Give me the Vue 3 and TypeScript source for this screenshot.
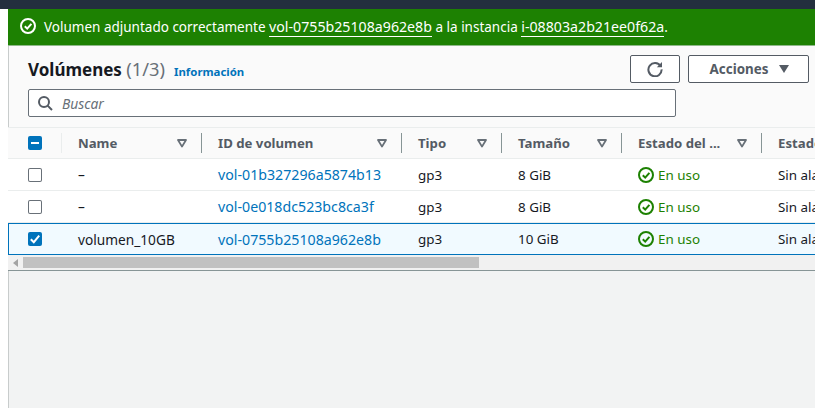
<template>
  <div class="page">
    <div class="top-bar"></div>
    <div class="body">
      <div class="left-strip"></div>
      <main class="content">
        <div class="flash">
          <svg class="flash-icon" viewBox="0 0 16 16" width="16" height="16">
            <circle cx="8" cy="8" r="7" fill="none" stroke="#fff" stroke-width="2" />
            <path d="M4.8 8.2 7.2 10.6 11.4 5.8" fill="none" stroke="#fff" stroke-width="2" />
          </svg>
          <span>Volumen adjuntado correctamente <a class="flash-link">vol-0755b25108a962e8b</a> a la instancia <a class="flash-link">i-08803a2b21ee0f62a</a>.</span>
        </div>

        <section class="panel">
          <div class="head">
            <div class="head-left">
              <div class="title-row">
                <h1>Volúmenes <span class="count">(1/3)</span></h1>
                <a class="info">Información</a>
              </div>
              <div class="search">
                <svg viewBox="0 0 16 16" width="16" height="16">
                  <circle cx="7" cy="7" r="5" fill="none" stroke="#545b64" stroke-width="2" />
                  <path d="M10.6 10.6 15 15" fill="none" stroke="#545b64" stroke-width="2" />
                </svg>
                <span>Buscar</span>
              </div>
            </div>
            <div class="actions">
              <button class="btn btn-icon">
                <svg viewBox="0 0 16 16" width="16" height="16">
                  <path d="M13.6 5.2A6.6 6.6 0 1 0 14.6 8.4" fill="none" stroke="#545b64" stroke-width="2" />
                  <path d="M15 1v5.2H9.8z" fill="#545b64" />
                </svg>
              </button>
              <button class="btn btn-actions">
                <span>Acciones</span>
                <svg viewBox="0 0 10 8" width="10" height="8"><path d="M0 0h10L5 8z" fill="#545b64" /></svg>
              </button>
            </div>
          </div>

          <div class="table">
            <div class="row header">
              <div class="cell check-cell">
                <span class="check on">
                  <svg viewBox="0 0 14 14" width="14" height="14"><path d="M3 7h8" stroke="#fff" stroke-width="2" /></svg>
                </span>
                <i class="sep light"></i>
              </div>
              <div v-for="col in columns" :key="col" class="cell head-cell">
                <span class="head-label">{{ col }}</span>
                <svg class="sort" viewBox="0 0 10 9" width="10" height="9">
                  <path d="M1 1h8L5 7.6z" fill="none" stroke="#687078" stroke-width="1.8" stroke-linejoin="round" />
                </svg>
                <i class="sep"></i>
              </div>
              <div class="cell head-cell"><span class="head-label">Estado</span></div>
            </div>

            <div v-for="vol in volumes" :key="vol.id" class="row item" :class="{ selected: vol.selected }">
              <div class="cell check-cell">
                <span class="check" :class="{ on: vol.selected }">
                  <svg v-if="vol.selected" viewBox="0 0 14 14" width="14" height="14">
                    <path d="M2.8 7.2 5.8 10.2 11.2 3.6" fill="none" stroke="#fff" stroke-width="2" />
                  </svg>
                </span>
              </div>
              <div class="cell name">{{ vol.name }}</div>
              <div class="cell"><a class="link">{{ vol.id }}</a></div>
              <div class="cell">gp3</div>
              <div class="cell">{{ vol.size }}</div>
              <div class="cell status">
                <svg viewBox="0 0 16 16" width="16" height="16">
                  <circle cx="8" cy="8" r="7" fill="none" stroke="#1d8102" stroke-width="2" />
                  <path d="M4.8 8.2 7.2 10.6 11.4 5.8" fill="none" stroke="#1d8102" stroke-width="2" />
                </svg>
                En uso
              </div>
              <div class="cell">Sin alarmas</div>
            </div>
          </div>

          <div class="scrollbar">
            <svg viewBox="0 0 5 8" width="5" height="8"><path d="M5 0v8L0 4z" fill="#a3a3a3" /></svg>
            <div class="thumb"></div>
          </div>
        </section>
      </main>
    </div>
  </div>
</template>

<script setup lang="ts">
interface Volume {
  name: string
  id: string
  size: string
  selected: boolean
}

const columns = ['Name', 'ID de volumen', 'Tipo', 'Tamaño', 'Estado del ...']

const volumes: Volume[] = [
  { name: '–', id: 'vol-01b327296a5874b13', size: '8 GiB', selected: false },
  { name: '–', id: 'vol-0e018dc523bc8ca3f', size: '8 GiB', selected: false },
  { name: 'volumen_10GB', id: 'vol-0755b25108a962e8b', size: '10 GiB', selected: true }
]
</script>

<style>
html,
body {
  margin: 0;
  overflow: hidden;
}
</style>

<style scoped>
.page {
  width: 815px;
  height: 408px;
  display: flex;
  flex-direction: column;
  overflow: hidden;
  background: #fff;
  font-family: "Noto Sans", "Open Sans", sans-serif;
  font-size: 13.4px;
  color: #16191f;
}

.top-bar {
  height: 9px;
  flex: none;
  background: #232f3e;
}

.body {
  flex: 1;
  display: flex;
  min-height: 0;
}

.left-strip {
  width: 8px;
  flex: none;
  background: #fff;
}

.content {
  flex: 1;
  min-width: 0;
  display: flex;
  flex-direction: column;
  background: #f2f3f3;
  box-shadow: inset 1px 0 0 #c8cccc;
}

.flash {
  height: 37px;
  flex: none;
  box-sizing: border-box;
  display: flex;
  align-items: center;
  gap: 8px;
  padding: 0 0 2px 12px;
  background: #1d8102;
  border-bottom: 1px solid #8fb98a;
  color: #fff;
  font-size: 13.5px;
  white-space: nowrap;
}

.flash-link {
  font-size: 14.2px;
  border-bottom: 1px solid #fff;
}

.panel {
  background: #fafafa;
  min-width: 0;
  overflow: hidden;
  box-shadow: inset 1px 0 0 #c8cccc;
}

.head {
  height: 82px;
  box-sizing: border-box;
  display: flex;
  padding: 9px 6px 0 20px;
  border-bottom: 1px solid #eaeded;
}

.head-left {
  width: 648px;
  flex: none;
}

.title-row {
  display: flex;
  align-items: baseline;
  gap: 9px;
  height: 34px;
}

h1 {
  margin: 0;
  font-size: 17px;
  line-height: 28px;
  font-weight: 700;
  color: #16191f;
}

.count {
  font-weight: 400;
  color: #687078;
  font-size: 18.3px;
}

.info {
  font-size: 11.4px;
  font-weight: 700;
  color: #0073bb;
}

.search {
  height: 28px;
  box-sizing: border-box;
  display: flex;
  align-items: center;
  gap: 9px;
  padding-left: 8px;
  background: #fff;
  border: 1px solid #687078;
  border-radius: 2px;
  font-style: italic;
  color: #687078;
  font-size: 13.8px;
}

.actions {
  display: flex;
  gap: 8px;
  margin-left: -46px;
  height: 28px;
}

.btn {
  height: 28px;
  box-sizing: border-box;
  display: flex;
  align-items: center;
  justify-content: center;
  padding: 0;
  background: #fff;
  border: 1px solid #545b64;
  border-radius: 2px;
  font: inherit;
  font-size: 13.4px;
  font-weight: 700;
  color: #545b64;
}

.btn-icon {
  width: 50px;
}

.btn-actions {
  width: 121px;
  gap: 11px;
  padding-left: 2px;
}

.table {
  width: 900px;
}

.row {
  display: grid;
  grid-template-columns: 54px 140px 200px 100px 120px 140px 146px;
}

.header {
  height: 31px;
  box-sizing: border-box;
  background: #fafafa;
  border-bottom: 1px solid #eaeded;
  font-size: 13.2px;
  font-weight: 700;
  color: #545b64;
}

.item {
  height: 32px;
  box-sizing: border-box;
  background: #fff;
  border-bottom: 1px solid #eaeded;
}

.item.selected {
  background: #f1faff;
  border-top: 1px solid #0073bb;
  border-bottom: 1px solid #0073bb;
  box-shadow: inset 1px 0 0 #0073bb;
}

.cell {
  position: relative;
  display: flex;
  align-items: center;
  padding-left: 16px;
  white-space: nowrap;
  overflow: hidden;
}

.name {
  font-size: 13.7px;
}

.check-cell {
  padding-left: 20px;
}

.head-label {
  flex: 1;
}

.sort {
  margin-right: 15px;
}

.sep {
  position: absolute;
  right: 0;
  top: 5px;
  width: 1px;
  height: 20px;
  background: #879596;
}

.sep.light {
  background: #eaeded;
}

.check {
  width: 14px;
  height: 14px;
  display: block;
  background: #fff;
  border-radius: 2px;
  box-shadow: inset 0 0 0 1px #687078;
}

.check.on {
  background: #0073bb;
  box-shadow: none;
}

.check svg {
  display: block;
}

.link {
  font-size: 14.2px;
  color: #0073bb;
}

.status {
  gap: 4px;
  color: #1d8102;
}

.scrollbar {
  height: 16px;
  width: 807px;
  display: flex;
  align-items: center;
  gap: 5px;
  padding-left: 5px;
  box-sizing: border-box;
  background: #f1f1f1;
  border-bottom: 1px solid #879596;
}

.thumb {
  width: 456px;
  height: 11px;
  background: #c1c1c1;
}
</style>
